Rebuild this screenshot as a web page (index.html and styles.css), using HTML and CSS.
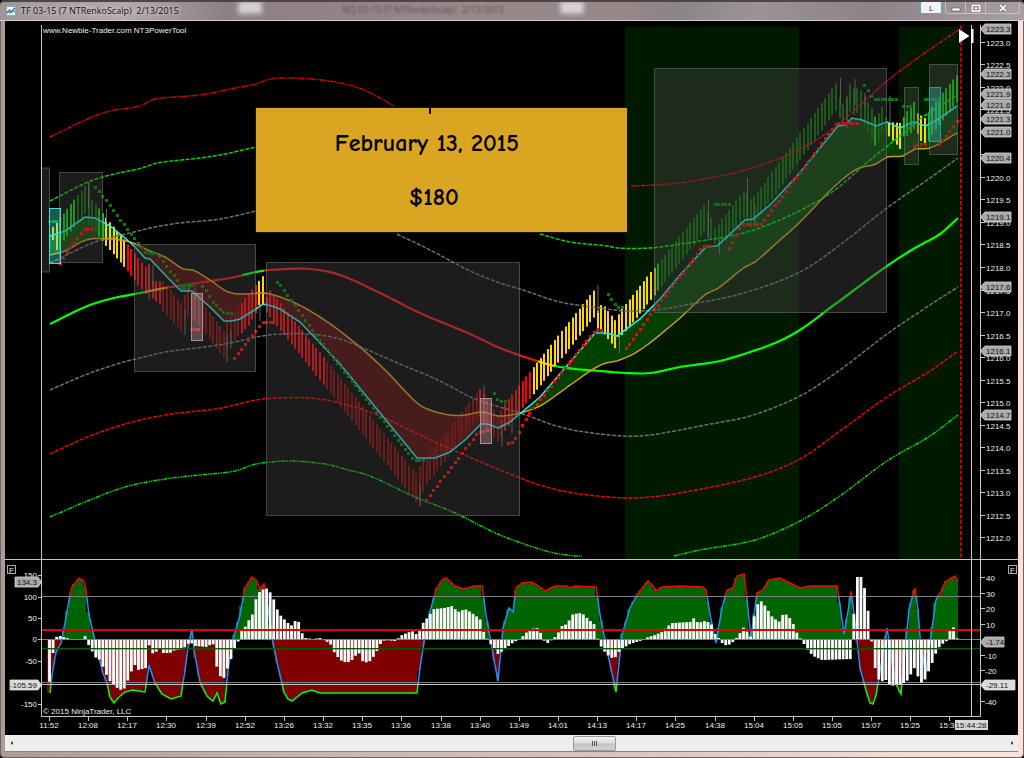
FILE: index.html
```html
<!DOCTYPE html>
<html lang="en">
<head>
<meta charset="utf-8">
<meta name="viewport" content="width=device-width, initial-scale=1">
<title>TF 03-15 (7 NTRenkoScalp) 2/13/2015</title>
<link rel="stylesheet" href="styles.css">
</head>
<body>
<div class="window">
  <header class="titlebar">
    <svg class="app-icon" viewBox="0 0 10 10" aria-hidden="true">
      <rect x="0.5" y="0.5" width="9" height="9" fill="#eef4fa" stroke="#8fa6bd"/>
      <path d="M1 7L3.500 4L5 6L9 2" fill="none" stroke="#2474c4" stroke-width="1.300"/>
      <path d="M1 5L4 7L9 5" fill="none" stroke="#3da44a" stroke-width="1"/>
    </svg>
    <h1 class="title">TF 03-15 (7 NTRenkoScalp)&nbsp; 2/13/2015</h1>
    <div class="glass" aria-hidden="true">
      <span class="glass-button glass-first"></span>
      <span class="glass-text">NQ 03-15 (7 NTRenkoScalp)&nbsp; 2/13/2015</span>
      <span class="glass-button glass-second"></span>
    </div>
    <button class="link-button" type="button">L</button>
    <div class="controls">
      <button type="button" aria-label="Minimize"><svg viewBox="0 0 10 8"><rect x="1" y="4" width="8" height="3" fill="#fff" stroke="#555" stroke-width=".6"/></svg></button>
      <button type="button" aria-label="Maximize"><svg viewBox="0 0 10 8"><rect x="1.500" y="1.500" width="7" height="5.500" fill="#666" stroke="#fff" stroke-width="1.600"/><rect x="3.500" y="3.300" width="3" height="2" fill="#fff"/></svg></button>
      <button class="close" type="button" aria-label="Close"><svg viewBox="0 0 10 8"><path d="M2 1L8 7M8 1L2 7" stroke="#555" stroke-width="3"/><path d="M2 1L8 7M8 1L2 7" stroke="#fff" stroke-width="1.800"/></svg></button>
    </div>
  </header>
  <main class="chart">
    <svg id="plot" class="plot" viewBox="5 21 1013 714" role="img" aria-label="TF 03-15 price chart"></svg>
    <section class="banner">
      <span class="banner-tick"></span>
      <p>February 13, 2015</p>
      <p>$180</p>
    </section>
  </main>
  <footer class="scroll">
    <button type="button" aria-label="Scroll left"><svg viewBox="0 0 6 6"><path d="M4 1V5L1.500 3Z" fill="#444"/></svg></button>
    <input type="range" min="0" max="1000" value="588" aria-label="Chart position">
    <button type="button" aria-label="Scroll right"><svg viewBox="0 0 6 6"><path d="M2 1V5L4.500 3Z" fill="#444"/></svg></button>
  </footer>
</div>
<script src="chart.js"></script>
</body>
</html>
```
FILE: styles.css
```css
* { box-sizing: border-box; }
body {
  margin: 0;
  background: #000;
  font-family: "Open Sans", "Noto Sans", sans-serif;
}
.window {
  display: flex;
  flex-direction: column;
  min-height: 100vh;
  padding: 0 6px 6px 5px;
  background: linear-gradient(90deg, #ab9a96, #c9b5b0 30%, #d8c3be 60%, #f9e2dc 95%);
  border-radius: 5px;
  box-shadow: inset 0 0 0 1px #6d6462;
}
.titlebar {
  position: relative;
  display: flex;
  align-items: flex-start;
  height: 21px;
  margin: 0 -6px 0 -5px;
  padding: 0 4px 0 6px;
  background: linear-gradient(90deg, #a09496, #b5a9aa 12%, #8d7f82 22%, #97888a 45%, #958688 62%, #8a8589 66%, #9b9398 74%, #8d8287 85%, #a9a0a6);
  border-top: 2px solid #4c4647;
  border-bottom: 1px solid #d8d0d0;
  border-radius: 5px 5px 0 0;
}
.app-icon { width: 10px; height: 10px; margin-top: 4px; }
.title {
  margin: 2px 0 0 5px;
  font-size: 9px;
  line-height: 14px;
  font-weight: 400;
  color: #111;
  white-space: nowrap;
  text-shadow: 0 0 5px #fff;
}
.glass {
  position: absolute;
  inset: 0;
  overflow: hidden;
  opacity: .7;
}
.glass-button, .glass-text {
  position: absolute;
  top: 0;
}
.glass-button {
  width: 22px;
  height: 11px;
  background: #f8f2f0;
  box-shadow: 0 0 3px 1px #b9d3dd;
  filter: blur(2px);
}
.glass-first { left: 23.300%; }
.glass-second { left: 54.800%; }
.glass-text {
  left: 33.400%;
  font-size: 9px;
  line-height: 16px;
  color: #463a3c;
  filter: blur(1px);
  white-space: nowrap;
}
.link-button {
  position: relative;
  width: 22px;
  height: 12px;
  margin: 0 3px 0 auto;
  padding: 0;
  background: #f2f2f2;
  border: 1px solid #3fb3dc;
  border-top: 0;
  border-radius: 2px;
  font: 8px/10px "Open Sans", sans-serif;
  color: #222;
}
.controls {
  position: relative;
  display: flex;
  border: 1px solid #c8c0c4;
  border-top: 0;
  border-radius: 0 0 3px 3px;
}
.controls button {
  display: grid;
  place-items: center;
  width: 20px;
  height: 11px;
  padding: 0;
  background: none;
  border: 0;
  border-right: 1px solid #c8c0c4;
}
.controls .close { width: 33px; border-right: 0; }
.controls svg { width: 10px; height: 8px; }
.chart {
  position: relative;
  flex: 1;
  background: #000;
}
.plot {
  display: block;
  width: 100%;
  height: auto;
}
.plot text {
  font-family: "Liberation Sans", Arial, sans-serif;
  font-size: 8px;
  fill: #eee;
}
.plot .tag-text { fill: #111; }
.plot .mid { text-anchor: middle; }
.plot .end { text-anchor: end; }
.plot .rule { stroke: #c4c4c4; stroke-width: 1; fill: none; }
.plot .level { stroke: #808080; stroke-width: 1; }
.plot .zone { fill: #444; fill-opacity: .41; stroke: #777; stroke-opacity: .55; }
.plot .teal { fill: #40e0d0; fill-opacity: .4; stroke: #40e0d0; }
.plot .teal-dim { fill: #40c0b4; fill-opacity: .35; stroke: #2f9a94; }
.plot .pink { fill: #d8a0a8; fill-opacity: .35; stroke: #b08a90; }
.banner {
  position: absolute;
  left: 24.700%;
  top: 12.100%;
  width: 36.850%;
  height: 17.650%;
  display: flex;
  flex-direction: column;
  align-items: center;
  justify-content: center;
  gap: 26px;
  background: #daa520;
  border: 1px solid #1c1400;
  color: #000;
  font-family: "Comic Sans MS", "Comic Neue", "Open Sans", sans-serif;
  font-size: 24px;
  line-height: 28px;
  font-weight: 600;
}
.banner p { margin: 0 0 0 -30px; }
.banner p + p { margin-left: -16px; }
.banner-tick {
  position: absolute;
  top: 0;
  left: 46.500%;
  width: 2px;
  height: 6px;
  background: #000;
}
.scroll {
  display: flex;
  align-items: center;
  height: 17px;
  background: #eee;
  border-bottom: 1px solid #8a8180;
}
.scroll button {
  display: grid;
  place-items: center;
  width: 13px;
  height: 16px;
  padding: 0;
  background: none;
  border: 0;
}
.scroll button svg { width: 6px; height: 6px; }
.scroll input {
  flex: 1;
  min-width: 0;
  height: 16px;
  margin: 0;
  background: none;
  appearance: none;
}
.scroll input::-webkit-slider-thumb {
  appearance: none;
  width: 43px;
  height: 15px;
  border: 1px solid #999;
  border-radius: 2px;
  background:
    repeating-linear-gradient(90deg, #555 0 1px, transparent 1px 2px) center / 6px 5px no-repeat,
    linear-gradient(#f2f2f2, #dcdcde 48%, #c4c4c8 52%, #d2d2d4);
}
```
FILE: chart.js
```js
const plot = document.getElementById('plot');
const FIRST = 49.5, STEP = 3.559, COUNT = 256;
const out = [];

const parse = s => s.trim().split(/\s+/).map(p => p.split(',').map(Number));
const d = pts => 'M' + pts.map(p => p[0] + ' ' + p[1]).join('L');
const path = (pts, color, width, dash) =>
  out.push(`<path d="${d(pts)}" fill="none" stroke="${color}" stroke-width="${width}"${dash ? ` stroke-dasharray="${dash}"` : ''}/>`);
const rect = (x, y, w, h, fill) =>
  out.push(`<rect x="${x.toFixed(2)}" y="${y.toFixed(1)}" width="${w}" height="${h.toFixed(1)}" fill="${fill}"/>`);
const cls = (name, x, y, x2, y2) =>
  out.push(`<rect class="${name}" x="${x}" y="${y}" width="${x2 - x}" height="${y2 - y}"/>`);
const rule = (x1, y1, x2, y2, name = 'rule') =>
  out.push(`<path class="${name}" d="M${x1} ${y1}L${x2} ${y2}"/>`);
const text = (x, y, s, name = '') => out.push(`<text x="${x}" y="${y}" class="${name}">${s}</text>`);

function at(pts, x, k = 1) {
  if (x <= pts[0][0]) return pts[0][k];
  for (let i = 1; i < pts.length; i++) {
    if (x <= pts[i][0]) {
      const a = pts[i - 1], b = pts[i];
      return a[k] + (b[k] - a[k]) * (x - a[0]) / (b[0] - a[0]);
    }
  }
  return pts[pts.length - 1][k];
}
const slice = (pts, x1, x2) =>
  [[x1, at(pts, x1)], ...pts.filter(p => p[0] > x1 && p[0] < x2), [x2, at(pts, x2)]];

// Cubic Hermite resampling through the given points
function smooth(pts) {
  const slope = pts.map((p, i) => {
    const a = pts[Math.max(0, i - 1)], b = pts[Math.min(pts.length - 1, i + 1)];
    return (b[1] - a[1]) / (b[0] - a[0]);
  });
  const res = [pts[0]];
  for (let i = 1; i < pts.length; i++) {
    const [x0, y0] = pts[i - 1], [x1, y1] = pts[i], h = x1 - x0;
    const n = Math.max(1, Math.round(h / 5));
    for (let j = 1; j <= n; j++) {
      const t = j / n, t2 = t * t, t3 = t2 * t;
      const y = (2 * t3 - 3 * t2 + 1) * y0 + (t3 - 2 * t2 + t) * h * slope[i - 1] +
        (3 * t2 - 2 * t3) * y1 + (t3 - t2) * h * slope[i];
      res.push([+(x0 + h * t).toFixed(1), +y.toFixed(1)]);
    }
  }
  return res;
}

// Session backgrounds
rect(625, 27, 174, 532, '#001a00');
rect(899, 27, 61, 532, '#001a00');

// Moving averages and the band between them
const fast = parse(`50,236 65,231 85,217 95,218 110,226 125,238 135,247 145,258 150,259 170,280 181,291 192,291
 210,307 224,321 232,321 240,319 253,311 263,304 272,306 280,309 300,322 340,364 417,458 435,458 450,452 465,440
 481,424 488,424 498,428 510,422 540,397 565,368 595,333 607,333 617,336 640,319 660,299 680,275 706,247 717,246
 745,220 753,219 770,205 797,176 838,126 845,125 852,118 862,120 876,126 887,122 900,128 913,122 926,126 940,118
 957,106`);
const slow = smooth(parse(`50,255 65,251 86,240 110,239 130,242 150,251 165,257 183,269 193,270 210,280 228,292
 245,294 264,293 280,297 305,308 340,331 380,365 417,403 430,410 450,415 465,415 483,412 498,416 520,413 540,406
 555,396 573,383 595,368 606,363 617,361 640,350 680,318 706,294 717,289 745,267 755,262 780,240 800,222 835,186
 857,169 876,164 887,157 903,156 915,149 930,148 957,133`));
[[50, 132, '#004600'], [132, 521, '#480000'], [521, 957, '#004000']].forEach(([a, b, c]) =>
  out.push(`<path fill="${c}" d="${d([...slice(fast, a, b), ...slice(slow, a, b).reverse()])}Z"/>`));

// Renko bars: x, top, bottom
const bars = parse(`49,235,250 53,227,240 56.5,223,250 60,218,250 64,213,240 85,186,214 88.5,182,225 92,200,225
 96,204,232 106.5,218,246 124.5,240,267 145.5,267,294 149,263,290 153,281,299 160,281,304 163.5,281,312
 181.5,304,331 185,294,320 188.5,290,317 196,294,322 203,303,330 224,331,358 227,322,350 231,317,344
 248.5,294,326 256,285,313 259.5,281,305 263,276,305 267,299,313 270,290,317 338,375,403 416,474,502
 420,465,506 424,461,488 480,389,416 488,399,430 499,417,443 502.5,407,434 530.5,371,398 594.5,290,317
 598,313,330 602,303,331 616,321,349 619.5,313,335 623,308,335 651,272,300 658.5,263,290 705,204,231
 708.5,214,240 712,218,240 716,231,245 719.5,222,248 744,191,218 748,193,222 751,200,228 758.5,191,218
 837,82,109 840,100,120 844,105,125 848,92,118 851,82,109 855,92,117 858,87,112 862,92,123 873,110,142
 876,119,147 883,105,132 887,122,134 890,122,137 901,123,150 904.5,115,132 908,110,137 915,101,128
 919,118,136 922,115,142 926,119,146 929,112,140 933,105,133 958,74,101`);
const tones = [[52, '#008000'], [58, '#ffd700'], [76, '#00d000'], [98, '#006400'], [103, '#00d000'], [126, '#ffd700'],
  [162, '#f00'], [241, '#8a0000'], [258, '#f00'], [265, '#ffd700'], [325, '#f00'], [477, '#8a0000'], [486, '#f00'],
  [503, '#8a0000'], [532, '#f00'], [655, '#ffd700'], [660, '#00d000'], [874, '#006a00'], [878, '#00d000'],
  [886, '#006a00'], [903, '#ffd700'], [917, '#00d000'], [928, '#ffd700'], [999, '#00d000']];
for (let i = 0; i < COUNT; i++) {
  const x = FIRST + i * STEP, top = at(bars, x);
  rect(Math.round(x - 1), top, 2, at(bars, x, 2) - top, tones.find(t => x < t[0])[1]);
}
parse(`88.5,182,208 106.5,209,222 149,268,300 153,265,285 185,310,335 195,285,300 227,335,362 231,330,348 260,305,321
 267,299,313 420,484,506 484,385,400 502,420,447 512,418,434 598,285,313 619.5,335,353 708.5,200,238 719.5,240,254
 747.5,178,218 755,205,225 840.5,78,106 847,98,128 855,79,105 865,93,108 890,96,122`)
  .forEach(([x, a, b]) => rect(x - .5, a, 1, b - a, '#666'));

// Deviation bands
const DASH = '4 1.5', DOTS = '4 1 1.5 1 1.5 1';
const bands = [
  ['#e00000', DOTS, '50,137 92,117 110,111 140,106 155,99 190,96 212,93 230,89 256,84 270,79 290,78 312,79 340,83 362,89 380,98 394,106'],
  ['#e00000', DOTS, '631,186 655,185 680,183 715,177 742,171 775,160 800,149 830,131 860,105 887,81 915,60 935,46 960,29'],
  ['#00d800', DASH, '50,201 88,182 110,175 142,168 157,163 200,158 225,154 256,147'],
  ['#00d800', DASH, '540,234 570,242 608,246 617,248 650,248 680,244 740,234 775,222 805,208 835,190 870,160 900,136 920,119 957,95'],
  ['#707070', DASH, '50,263 95,242 130,233 155,227 180,223 220,219 256,211'],
  ['#707070', DASH, '397,234 430,250 470,271 500,283 520,289 560,302 600,308 625,311 655,310 680,306 740,294 800,272 840,245 887,208 930,178 958,158'],
  ['#707070', DASH, '50,390 85,375 120,363 140,358 165,352 205,347 235,342 256,337 280,334 310,334 340,339 363,348 400,364 440,381 475,399 520,413 560,427 600,434 640,436 680,430 705,425 750,416 800,396 840,370 887,334 930,305 958,287'],
  ['#f00000', DASH, '50,454 85,438 125,424 165,415 215,409 235,405 256,400 280,398 310,398 340,403 380,416 420,435 460,453 520,478 550,488 580,494 625,498 650,497 680,493 755,477 800,459 840,431 887,397 930,371 958,351'],
  ['#00d800', DOTS, '50,517 85,502 125,487 165,479 200,475 235,471 256,464 290,461 325,464 345,469 370,476 415,497 455,513 500,535 550,552 575,556 582,556'],
  ['#00d800', DOTS, '674,556 700,550 755,540 800,521 840,496 887,461 930,436 958,415']
];
bands.forEach(([c, dash, p]) => path(smooth(parse(p)), c, 1.5, dash));

const trend = smooth(parse(`50,324 85,307 110,299 145,292 165,288 190,284 230,278 256,272 270,270 310,269 340,275
 380,293 420,313 470,334 500,348 537,361 555,366 575,369 600,371 625,373 650,373 680,367 720,361 750,352 775,343
 800,330 830,308 887,266 915,248 940,234 958,218`));
[[50, 145, '#0f0'], [145, 167, '#daa520'], [167, 242, '#e01010'], [242, 264, '#0f0'], [264, 538, '#f01414'],
  [538, 555, '#ffd700'], [555, 958, '#0f0']].forEach(([a, b, c]) => path(slice(trend, a, b), c, 2.2));
path(slow, '#d09c1e', 1.5);
path(fast, '#1fe8ea', 1.6);

// Trailing stop markers
const dots = (color, runs) => runs.forEach(run => {
  const pts = parse(run), last = pts[pts.length - 1][0];
  for (let i = 0; i < COUNT; i++) {
    const x = FIRST + i * STEP;
    if (x >= pts[0][0] - 1 && x <= last + 1) rect(Math.round(x - 1.5), Math.round(at(pts, x) - 1.5), 3, 3, color);
  }
});
dots('#008000', ['50,221 58,221', '96,187 114,211 125,226 136,240 146,253 157,253 181,285 192,285', '182,288 189,288',
  '203,286 213,302 224,313 231,313', '278,282 333,358 340,366 414,460 425,461', '492,390 499,401 506,401',
  '606,291 617,307 624,307', '716,204 730,204', '862,81 873,99 898,100', '902,106 912,106', '926,99 940,99']);
dots('#f00', ['60,264 67,253 76,241 85,229 93,229', '192,329 200,329', '235,358 263,322 274,322',
  '427,500 478,433 488,430', '509,443 514,442 530,413 595,331 603,330', '627,348 655,309 680,277 703,247 713,246',
  '730,248 741,226 745,224 762,224 835,126 837,123 859,123', '912,150 916,144 925,144', '940,144 948,134 960,118']);

// Highlighted zones
[['zone', 41.5, 168, 49.5, 272], ['zone', 59.5, 172.5, 102.5, 262.5], ['zone', 134.5, 244.5, 255.5, 371.5],
  ['zone', 266.5, 262.5, 519.5, 515.5], ['zone', 654.5, 68.5, 886.5, 312.5], ['zone', 904.5, 87.5, 918.5, 164.5],
  ['zone', 929.5, 64.5, 957.5, 154.5], ['teal', 49.5, 208.5, 60.5, 263.5], ['teal-dim', 929.5, 87.5, 940.5, 141.5],
  ['pink', 191.5, 293.5, 202.5, 340.5], ['pink', 480.5, 398.5, 491.5, 443.5]].forEach(z => cls(...z));

// Oscillator
const ZERO = 639.5;
const osc = parse(`50,693 52,675 56,652 61,643 66,618 70,595 72,587 79,578 84,581 86,590 89,615 93,632 97,650
 103,673 107,683 110,697 114,703 119,697 125,692 133,690 145,692 149,665 155,683 162,694 171,699 181,696 185,670
 188,647 192,629 194,650 200,682 207,696 213,701 217,693 221,704 225,702 228,670 233,640 240,615 245,588 252,577
 256,580 260,590 264,584 268,608 272,638 277,662 284,692 288,699 292,701 302,693 312,690 320,693 417,693 420,668
 425,635 430,612 436,590 442,580 446,578 455,586 463,589 475,586 482,586 486,615 492,648 498,681 503,628 509,608
 513,612 516,588 522,583 532,582 540,587 545,591 555,586 567,586 570,588 575,586 596,587 600,615 607,650 616,692
 622,635 630,608 637,595 648,581 653,586 656,591 662,587 680,586 703,587 706,590 711,620 716,643 722,608 727,590
 733,588 737,576 744,574 746,590 751,638 757,593 763,590 769,580 780,578 790,583 800,588 810,586 837,586 840,605
 844,634 850,600 851,591 856,630 860,668 866,690 870,703 873,704 876,695 882,660 887,628 892,660 896,684 901,694
 903,670 909,610 912,598 915,588 918,610 921,650 926,672 931,635 936,600 942,590 945,582 955,576 958,582`);
const hist = parse(`49,686 52.5,656 56,637 60,636 67,638 75,640 81,640 85,636 88,644 92,651 95,657 100,660 106,674
 110,681 116,687 120,690 124,689 128,680 131,672 135,665 138,670 146,668 149,645 153,654 160,649 163,653 170,653
 175,650 183,649 190,642 195,646 207,647 213,643 217,668 220,676 224,678 228,667 231,659 234,650 238,642 241,631
 245,627 249,620 252,616 256,599 260,591 266,588 270,592 274,600 277,609 281,616 287,622 291,626 295,621 298,620
 302,633 305,638 313,639 320,638 325,641 330,643 334,652 340,660 347,663 352,660 357,654 359,653 362,661 368,663
 372,659 377,651 381,643 385,640 395,641 402,635 412,631 416,634 419,631 423,623 428,617 434,609 444,608 452,606
 458,612 465,609 472,613 480,619 484,633 488,640 492,646 498,654 504,650 511,644 516,641 520,639 524,635 530,629
 537,628 540,631 543,640 548,643 553,639 557,635 562,626 567,624 573,614 582,613 588,619 594,624 597,637 600,645
 605,652 611,658 616,657 620,650 630,644 640,641 646,638 655,635 662,632 668,626 672,623 690,622 694,618 698,623
 705,621 711,623 714,633 718,637 722,643 727,646 733,642 738,636 744,627 748,633 751,637 754,617 757,605 761,601
 766,607 773,618 780,622 783,614 788,615 795,627 798,636 802,640 806,648 813,656 822,660 852,659 854,610 857,577
 863,577 866,599 869,616 872,645 876,674 880,682 886,680 891,686 900,684 904,683 908,680 911,674 915,667 919,680
 923,684 927,675 933,661 937,650 941,645 948,640 950,630 954,627 958,642`);
for (let i = 0; i < COUNT; i++) {
  const x = FIRST + i * STEP, y = at(osc, x);
  const left = Math.round(x - 2.2), right = Math.round(x - 2.2 + STEP);
  rect(left, Math.min(y, ZERO), right - left, Math.abs(y - ZERO), y < ZERO ? '#006400' : '#800000');
}
out.push(`<defs>
 <clipPath id="high"><rect x="42" y="560" width="938" height="37"/></clipPath>
 <clipPath id="mid"><rect x="42" y="597" width="938" height="85"/></clipPath>
 <clipPath id="low"><rect x="42" y="682" width="938" height="33"/></clipPath></defs>`);
[['high', '#f00'], ['mid', '#1e90ff'], ['low', '#0f0']].forEach(([id, c]) =>
  out.push(`<path d="${d(osc)}" fill="none" stroke="${c}" stroke-width="1.5" clip-path="url(#${id})"/>`));
rule(42, 596.5, 980, 596.5, 'level');
rule(42, 682.5, 980, 682.5, 'level');
for (let i = 0; i < COUNT; i++) {
  const x = FIRST + i * STEP, y = at(hist, x);
  rect(x - 1.4, Math.min(y, ZERO), 2.8, Math.abs(y - ZERO), '#fff');
}
rule(42, ZERO, 980, ZERO, 'level');
rule(42, 684.5, 980, 684.5);
rect(42, 629, 938, 2, '#e00000');
rect(42, 648, 938, 1.4, '#006000');

// Axes
rule(41.5, 25, 41.5, 716.5);
rule(971.5, 25, 971.5, 716.5);
rule(980.5, 25, 980.5, 716.5);
rule(5, 559.5, 1018, 559.5);
rule(41, 716.5, 980.5, 716.5);
path([[961, 25], [961, 557]], '#c00000', 2, '4 1.5');
out.push('<path d="M959 29L969.500 36L959 43Z" fill="#fff"/>');
rect(971, 29, 2.5, 14, '#fff');

for (let i = 0; i <= 22; i++) {
  const y = 42.7 + i * 22.53;
  rule(980, Math.round(y) - .5, 985, Math.round(y) - .5);
  text(986, Math.round(y) + 3, (1223 - i / 2).toFixed(1));
}
[[575, 150], [597, 100], [618, 50], [639, 0], [661, -50], [704, -150]].forEach(([y, v]) => {
  rule(38, y + .5, 42, y + .5);
  text(37, y + 3, v, 'end');
});
[[577, 40], [593, 30], [608, 20], [624, 10], [655, -10], [670, -20], [701, -40]].forEach(([y, v]) => {
  rule(980, y + .5, 985, y + .5);
  text(v < 0 ? 985 : 986, y + 4, v);
});
'11:52 12:08 12:17 12:30 12:39 12:52 13:26 13:32 13:35 13:36 13:38 13:40 13:49 14:01 14:13 14:17 14:25 14:38 15:04 15:05 15:05 15:07 15:25 15:35'
  .split(' ').forEach((t, i) => {
    const x = Math.round(49 + i * 39.15);
    rule(x + .5, 717, x + .5, 721);
    text(x, 728, t, 'mid');
  });

// Value tags
const rightTag = (y, s, w, fill) => {
  out.push(`<path d="M980.500 ${y}L985 ${y - 5}H${985 + w}V${y + 5}H985Z" fill="${fill}" stroke="#d8d8d8" stroke-width=".8"/>`);
  text(986, y + 3, s, 'tag-text');
};
const leftTag = (y, s, x, fill) => {
  out.push(`<path d="M41.500 ${y}L38 ${y - 5}H${x}V${y + 5}H38Z" fill="${fill}" stroke="#d8d8d8" stroke-width=".8"/>`);
  text(37, y + 3, s, 'tag-text end');
};
[[29, '1223.3'], [74, '1222.3'], [94, '1221.9'], [105, '1221.6'], [119, '1221.3'], [132, '1221.0'], [158, '1220.4'],
  [217, '1219.1'], [287, '1217.6'], [351, '1216.1'], [415, '1214.7']].forEach(([y, s]) => rightTag(y, s, 26, '#a9a9a9'));
rightTag(642, '-1.74', 19, '#a9a9a9');
rightTag(685, '-29.11', 30, '#dcdcdc');
leftTag(582, '134.3', 15, '#a9a9a9');
leftTag(685, '-105.59', 10, '#dcdcdc');
rect(955, 720, 33, 10, '#d8d8d8');
text(971, 728, '15:44:28', 'tag-text mid');

[[7.5, 11], [1008.5, 1012]].forEach(([x, tx]) => {
  out.push(`<rect x="${x}" y="565.500" width="8" height="8" fill="#000" stroke="#aaa"/>`);
  text(tx + .5, 572.5, 'F', 'mid');
});
text(43, 33, 'www.Newbie-Trader.com NT3PowerTool');
text(43, 714, '© 2015 NinjaTrader, LLC');

plot.innerHTML = out.join('');
```
